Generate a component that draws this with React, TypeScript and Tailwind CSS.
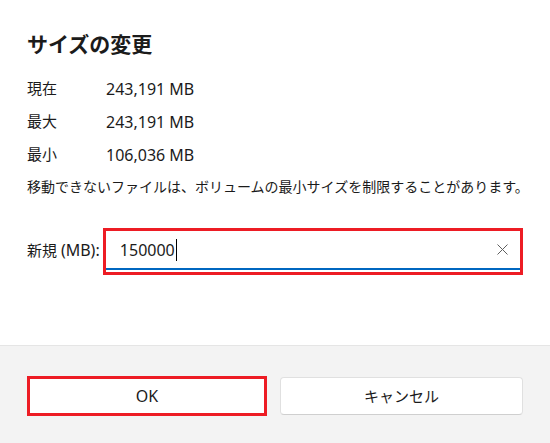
import React from 'react';

const font = "font-['Noto_Sans','Noto_Sans_CJK_JP',sans-serif]";

const rows = [
  { label: '現在', value: '243,191 MB' },
  { label: '最大', value: '243,191 MB' },
  { label: '最小', value: '106,036 MB' },
];

export default function App() {
  return (
    <div className={`w-[550px] h-[443px] flex flex-col bg-white text-[#1b1b1b] ${font}`}>
      {/* Body */}
      <div className="h-[345px] flex flex-col px-[27px] pt-[30px]">
        <h1 className="h-[28px] leading-[28px] text-[21px] font-semibold">サイズの変更</h1>

        <div className="mt-[14px] flex flex-col">
          {rows.map((row) => (
            <div key={row.label} className="h-[33px] flex items-center">
              <span className="w-[79px] text-[15px]">{row.label}</span>
              <span className="text-[16px]">{row.value}</span>
            </div>
          ))}
        </div>

        <p className="h-[30px] flex items-center text-[14px] whitespace-nowrap">
          移動できないファイルは、ボリュームの最小サイズを制限することがあります。
        </p>

        {/* New size input */}
        <div className="mt-[27px] flex items-center">
          <span className="w-[76px] text-[15px] whitespace-nowrap -mt-[4px]">
            新規 <span className="text-[16px]">(MB):</span>
          </span>
          <div className="w-[421px] border-[3px] border-[#ed1c24] pb-[2px] bg-white">
            <div className="h-[39px] flex items-center pl-[14px] pr-[12px] border-b-2 border-[#0067c0]">
              <span className="text-[16px] leading-none">150000</span>
              <span className="w-px h-[22px] bg-black ml-px" />
              <div className="flex-1" />
              <svg width="11" height="11" viewBox="0 0 11 11" className="text-[#5f5f5f]">
                <path d="M0.5 0.5 L10.5 10.5 M10.5 0.5 L0.5 10.5" stroke="currentColor" strokeWidth="1" fill="none" />
              </svg>
            </div>
          </div>
        </div>
      </div>

      {/* Footer */}
      <div className="flex-1 bg-[#f3f3f3] border-t border-[#e5e5e5] px-[27px] pt-[30px] flex items-start gap-[13px]">
        <button className="w-[240px] h-[40px] bg-white border-[3px] border-[#ed1c24] text-[16px] text-[#1b1b1b] flex items-center justify-center">
          OK
        </button>
        <button className="w-[243px] h-[38px] mt-px bg-white border border-[#e0e0e0] border-b-[#cfcfcf] rounded-[4px] text-[15px] text-[#1b1b1b] flex items-center justify-center">
          キャンセル
        </button>
      </div>
    </div>
  );
}
